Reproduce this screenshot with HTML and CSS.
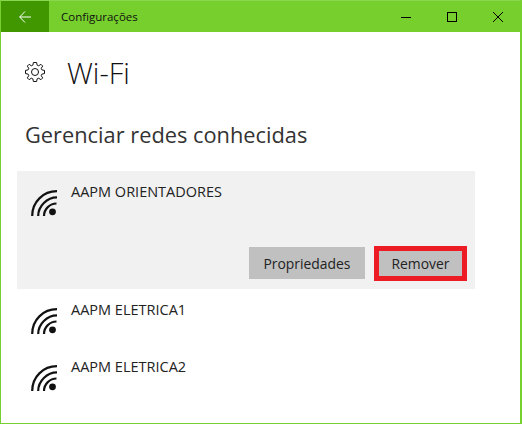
FILE: index.html
```html
<!DOCTYPE html>
<html lang="pt-BR">
<head>
    <meta charset="UTF-8">
    <title>Configurações</title>
    <link rel="stylesheet" href="styles.css">
</head>
<body>

<div class="window">
    <div class="titlebar">
        <div class="back">
            <svg width="12" height="12" viewBox="0 0 12 12"><path d="M6 .5.7 6l5.3 5.500M.7 6H12" fill="none" stroke="#fff" stroke-width="1"/></svg>
        </div>
        <div class="title">Configurações</div>
        <div class="controls">
            <svg width="12" height="12" viewBox="0 0 12 12"><path d="M1 6.500h10" stroke="#000" fill="none"/></svg>
            <svg width="12" height="12" viewBox="0 0 12 12"><rect x="1.500" y="1.500" width="9" height="9" stroke="#000" fill="none"/></svg>
            <svg width="12" height="12" viewBox="0 0 12 12"><path d="M1 1l10 10M11 1 1 11" stroke="#000" fill="none"/></svg>
        </div>
    </div>

    <div class="header">
        <svg class="gear" width="20" height="20" viewBox="0 0 20 20"><path d="M8.400.5H11.600L12.100 3.100 13.700 3.800 15.900 2.300 17.700 4.100 16.200 6.300 16.900 7.900 19.500 8.400V11.600L16.900 12.100 16.200 13.700 17.700 15.900 15.900 17.700 13.700 16.200 12.100 16.900 11.600 19.500H8.400L7.900 16.900 6.300 16.200 4.100 17.700 2.300 15.900 3.800 13.700 3.100 12.100 .5 11.600V8.400L3.100 7.900 3.800 6.300 2.300 4.100 4.100 2.300 6.300 3.800 7.900 3.100Z" fill="none" stroke="#111" stroke-linejoin="round"/><circle cx="10" cy="10" r="3.500" fill="none" stroke="#111"/></svg>
        <h1>Wi-Fi</h1>
    </div>

    <h2>Gerenciar redes conhecidas</h2>

    <div class="network selected">
        <div class="network-info">
            <svg class="wifi" width="26" height="26" viewBox="0 0 26 26"><use href="#wifi-icon"/></svg>
            <span class="name">AAPM ORIENTADORES</span>
        </div>
        <div class="actions">
            <button class="button">Propriedades</button>
            <button class="button remove">Remover</button>
        </div>
    </div>

    <div class="network">
        <div class="network-info">
            <svg class="wifi" width="26" height="26" viewBox="0 0 26 26"><use href="#wifi-icon"/></svg>
            <span class="name">AAPM ELETRICA1</span>
        </div>
    </div>

    <div class="network">
        <div class="network-info">
            <svg class="wifi" width="26" height="26" viewBox="0 0 26 26"><use href="#wifi-icon"/></svg>
            <span class="name">AAPM ELETRICA2</span>
        </div>
    </div>
</div>

<svg class="defs" width="0" height="0">
    <symbol id="wifi-icon" viewBox="0 0 26 26">
        <g fill="none" stroke="#111" stroke-width="2.200">
            <path d="M1.200 26C1.200 12 12 1.200 26 1.200"/>
            <path d="M7.200 26C7.200 16 16 7.400 26 7.400"/>
            <path d="M13 26C13 19 19 13.500 25.500 13.500"/>
        </g>
        <circle cx="21.500" cy="21.800" r="3.400" fill="#111"/>
    </symbol>
</svg>

</body>
</html>
```

FILE: styles.css
```css
html, body { margin: 0; height: 100%; }
body { font-family: "Open Sans", "Noto Sans", sans-serif; color: #222; background-color: #fff; overflow: hidden; }
.window { height: 424px; box-sizing: border-box; border: 1px solid #76d02e; border-right-width: 2px; border-top-color: #8ad64e; background-color: #fff; }
.titlebar { display: flex; align-items: center; height: 31px; background-color: #76cf2c; }
.back { display: flex; align-items: center; justify-content: center; width: 48px; height: 31px; background-color: #409700; }
.title { margin-left: 12px; font-size: 11.500px; color: #111; }
.controls { display: flex; gap: 34px; margin-left: auto; margin-right: 16px; }
.header { display: flex; align-items: center; margin: 22px 0 0 24px; height: 36px; }
.gear { margin-right: 22px; }
h1 { margin: 0; font-size: 29px; font-weight: 300; color: #111; }
h2 { margin: 30px 0 22px 24px; font-size: 21.800px; font-weight: 400; color: #333; }
.network { margin-left: 16px; width: 458px; box-sizing: border-box; padding: 12px 0 0 14px; height: 57px; }
.network.selected { height: 118px; background-color: #f1f1f1; }
.network-info { display: flex; align-items: flex-start; }
.wifi { margin-top: 7px; margin-right: 14px; }
.name { font-size: 14.500px; line-height: 18px; color: #222; }
.actions { display: flex; justify-content: flex-end; align-items: flex-start; gap: 9px; margin-top: 30px; padding-right: 8px; }
.button { height: 32px; margin-top: 1px; padding: 0; width: 116px; border: none; background-color: #c0c0c0; font-family: inherit; font-size: 13.900px; color: #222; }
.remove { width: 93px; height: 35px; margin-top: 0; border: 5px solid #ed1c24; }
.defs { position: absolute; }
```
